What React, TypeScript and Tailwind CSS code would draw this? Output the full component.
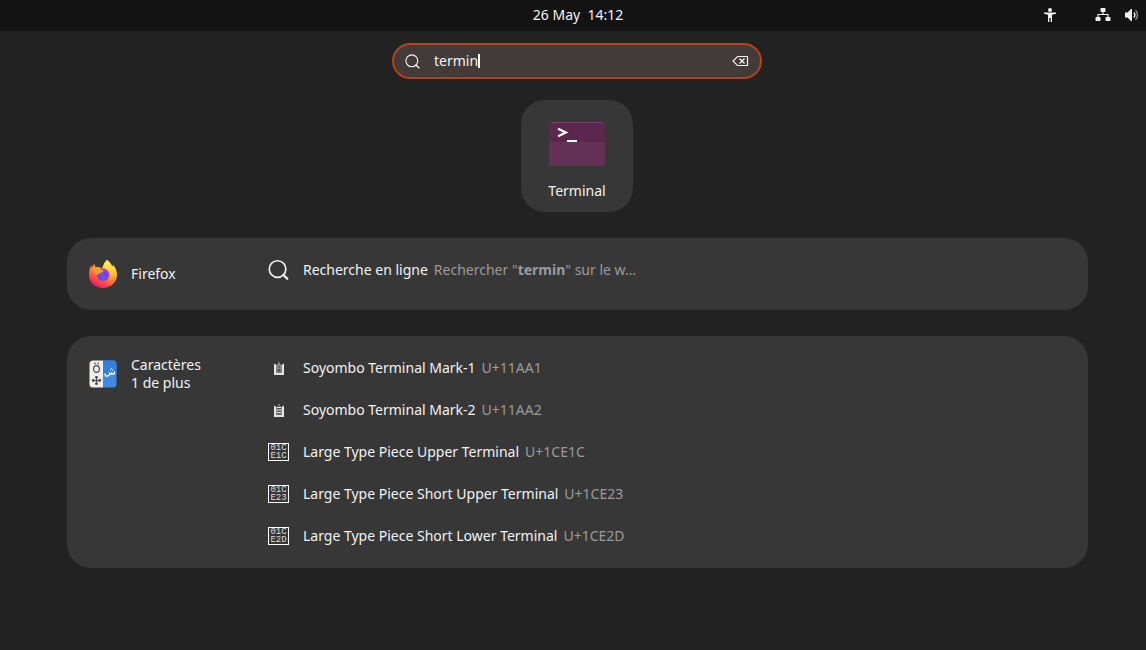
import type { ReactNode } from "react";

type Result = {
  icon: ReactNode;
  title: string;
  detail: ReactNode;
};

function AccessibilityIcon() {
  return (
    <svg className="h-4 w-4" viewBox="0 0 16 16" fill="currentColor" aria-hidden="true">
      <circle cx="8" cy="3" r="2" />
      <path d="M2 5.500h12v1.300l-4 1V15H8.700v-4H7.300v4H6V7.800l-4-1z" />
    </svg>
  );
}

function NetworkIcon() {
  return (
    <svg className="h-4 w-4" viewBox="0 0 16 16" fill="currentColor" aria-hidden="true">
      <rect x="5.500" y="1" width="5" height="4" rx="0.800" />
      <rect x="0.500" y="10" width="5" height="4" rx="0.800" />
      <rect x="10.500" y="10" width="5" height="4" rx="0.800" />
      <path d="M8 5v2.500M3 10.500v-3h10v3" fill="none" stroke="currentColor" strokeWidth="1.100" />
    </svg>
  );
}

function VolumeIcon() {
  return (
    <svg className="h-4 w-4" viewBox="0 0 16 16" fill="none" aria-hidden="true">
      <path d="M1 5.500h2.500L7 2h1v12H7l-3.500-3.500H1z" fill="currentColor" />
      <path d="M9.800 5.500a3.500 3.500 0 0 1 0 5" stroke="currentColor" strokeWidth="1.400" />
      <path d="M11.500 3.300a6.500 6.500 0 0 1 0 9.400" stroke="currentColor" strokeWidth="1.400" opacity="0.550" />
    </svg>
  );
}

function SearchIcon({ className }: { className: string }) {
  return (
    <svg className={className} viewBox="0 0 22 22" fill="none" stroke="currentColor" aria-hidden="true">
      <circle cx="10" cy="10" r="8.700" strokeWidth="1.700" />
      <path d="m16.200 16.200 4 4" strokeWidth="2.400" strokeLinecap="round" />
    </svg>
  );
}

function ClearIcon() {
  return (
    <svg className="h-4 w-[17px]" viewBox="0 0 17 16" fill="none" stroke="currentColor" aria-hidden="true">
      <path d="M5.500 3.500h10v9h-10L1 8z" strokeWidth="1.200" />
      <path d="m7.500 5.500 5 5m0-5-5 5" strokeWidth="1.300" />
    </svg>
  );
}

function TerminalIcon() {
  return (
    <svg className="h-11 w-14" viewBox="0 0 56 44" aria-hidden="true">
      <rect width="56" height="44" rx="4" fill="#643056" />
      <path d="M0 20V4a4 4 0 0 1 4-4h48a4 4 0 0 1 4 4v16z" fill="#5c274e" />
      <path d="M3 0.500h50" stroke="#74476a" />
      <path d="m9 6.800 7.800 3.700L9 14.200" fill="none" stroke="#fff" strokeWidth="2.200" />
      <path d="M18 19h10" stroke="#fff" strokeWidth="2" />
    </svg>
  );
}

function FirefoxIcon() {
  return (
    <svg className="h-7 w-7 shrink-0" viewBox="0 0 28 28" aria-hidden="true">
      <defs>
        <linearGradient id="fx-body" x1="0.850" y1="0.100" x2="0.350" y2="1">
          <stop offset="0" stopColor="#fff44f" />
          <stop offset="0.300" stopColor="#ffb52c" />
          <stop offset="0.600" stopColor="#ff7139" />
          <stop offset="0.850" stopColor="#ff3647" />
          <stop offset="1" stopColor="#e31587" />
        </linearGradient>
        <linearGradient id="fx-flame" x1="0.500" y1="0" x2="0.600" y2="1">
          <stop offset="0" stopColor="#fff44f" />
          <stop offset="0.500" stopColor="#ffd43c" />
          <stop offset="1" stopColor="#ff8a30" />
        </linearGradient>
        <radialGradient id="fx-globe" cx="0.450" cy="0.650" r="0.700">
          <stop offset="0" stopColor="#5a5ee6" />
          <stop offset="0.500" stopColor="#7543e5" />
          <stop offset="1" stopColor="#b833e1" />
        </radialGradient>
      </defs>
      <path
        d="M18 0c3 2.500 4.500 4.500 5.200 6.700.7-.8.7-1.500.6-2.200C26.500 7.500 28 11 28 14.500 28 22.500 21.700 28 14 28S0 22.500 0 14.500c0-4 .9-6.800 2.200-9.300l.5 2.700C3.400 6.200 4.400 5 5.700 4c0 1.500.3 2.500 1 3.300 2.100-.5 4 .1 5.800 1.100z"
        fill="url(#fx-body)"
      />
      <path
        d="M18 0c-2.700 2.100-4 4.800-3.800 8 4.200.2 7.100 3.100 7.100 7 0 2.400-.7 4.300-2.500 5.800 5.500-1.100 8.500-6.200 7.300-11.500-.8-2.200-1.700-1.900-2.900-2.600C22.500 4.400 20.500 2.100 18 0z"
        fill="url(#fx-flame)"
      />
      <circle cx="14" cy="14.800" r="6.200" fill="url(#fx-globe)" />
      <path
        d="M2.500 9.500c1.500-1.300 3-1.700 4.600-1.500 1.800-.2 3.200.5 4.200 1.600l3.200.8c-.2 1.500-2 2.300-3.700 2.700-.6.900-1.900 1.500-2.900 1.900-1.400-.6-3.200-2-5.400-5.500z"
        fill="#ff9a2c"
      />
    </svg>
  );
}

function CharactersIcon() {
  return (
    <svg className="h-7 w-7 shrink-0" viewBox="0 0 28 28" aria-hidden="true">
      <path d="M4 .5h10v27H4A3.500 3.500 0 0 1 .5 24V4A3.500 3.500 0 0 1 4 .5z" fill="#f0efed" />
      <path d="M14 .5h10A3.500 3.500 0 0 1 27.500 4v20a3.500 3.500 0 0 1-3.500 3.500H14z" fill="#3e8ae5" />
      <path d="M14 .5h10A3.500 3.500 0 0 1 27.500 4v10H14z" fill="#357fdd" />
      <g fill="none" stroke="#4a4a4a">
        <ellipse cx="7.500" cy="9" rx="2.900" ry="3.300" strokeWidth="1.200" />
        <path d="M5.300 3.500h1.500M8.300 3.500h1.500" strokeWidth="1.400" />
        <path d="M7.500 16.500v7.500M3.500 20.500h8" strokeWidth="1.200" />
      </g>
      <g fill="#4a4a4a">
        <circle cx="7.500" cy="17.300" r="1.400" />
        <circle cx="7.500" cy="23.700" r="1.400" />
        <circle cx="4.300" cy="20.500" r="1.400" />
        <circle cx="10.700" cy="20.500" r="1.400" />
      </g>
      <path
        d="M16.200 13.500c-1 3.500 4.300 3.700 4.300 0v-1.300 1c0 1.300 2.200 1.300 2.200 0v-1 1c0 1.300 2.800 1.300 2.800 0v-1.700"
        fill="none"
        stroke="#fff"
        strokeWidth="1.300"
      />
      <path d="M21 10h1M23 10h1M22 8.500h1" stroke="#fff" strokeWidth="1.100" />
    </svg>
  );
}

function SoyomboGlyph({ variant }: { variant: 1 | 2 }) {
  return (
    <svg className="h-[13px] w-2.5" viewBox="0 0 10 13" aria-hidden="true">
      <path d="M0 1.500 2.500 3v10H0zM10 1.500 7.500 3v10H10z" fill="#e6e6e6" />
      <path d="M2 11h6v2H2z" fill="#dedede" />
      {variant === 1 ? (
        <>
          <path d="M2.500 3 5 1l2.500 2v8h-5z" fill="#858585" />
          <path d="M5 0v2" stroke="#aaa" />
          <path d="M5 4v2M3.500 9 5 7l1.500 2z" fill="none" stroke="#4a4a4a" />
        </>
      ) : (
        <>
          <path d="M2.500 2.500h5V11h-5z" fill="#8a8a8a" />
          <path d="M5 0v2" stroke="#bbb" />
          <path d="M3 3.500h4M3 6h4M3 8.500h4" stroke="#ececec" />
          <path d="M3 4.700h4M3 7.200h4M3 9.700h4" stroke="#444" />
        </>
      )}
    </svg>
  );
}

function CodepointBox({ lines }: { lines: [string, string] }) {
  return (
    <span className="flex w-[21px] flex-col items-center border border-white font-['Liberation_Mono','DejaVu_Sans_Mono',monospace] text-[9px] leading-[8px] text-[#dcdcdc]">
      <span>{lines[0]}</span>
      <span>{lines[1]}</span>
    </span>
  );
}

const WEB_RESULTS: Result[] = [
  {
    icon: <SearchIcon className="h-[22px] w-[22px]" />,
    title: "Recherche en ligne",
    detail: (
      <>
        Rechercher "<b>termin</b>" sur le w…
      </>
    ),
  },
];

const CHARACTER_RESULTS: Result[] = [
  { icon: <SoyomboGlyph variant={1} />, title: "Soyombo Terminal Mark-1", detail: "U+11AA1" },
  { icon: <SoyomboGlyph variant={2} />, title: "Soyombo Terminal Mark-2", detail: "U+11AA2" },
  { icon: <CodepointBox lines={["01C", "E1C"]} />, title: "Large Type Piece Upper Terminal", detail: "U+1CE1C" },
  { icon: <CodepointBox lines={["01C", "E23"]} />, title: "Large Type Piece Short Upper Terminal", detail: "U+1CE23" },
  { icon: <CodepointBox lines={["01C", "E2D"]} />, title: "Large Type Piece Short Lower Terminal", detail: "U+1CE2D" },
];

type ProviderCardProps = {
  icon: ReactNode;
  name: string;
  more?: string;
  results: Result[];
};

function ProviderCard({ icon, name, more, results }: ProviderCardProps) {
  return (
    <section className="flex w-full items-start rounded-3xl bg-[#373737] py-[11px]">
      <button
        type="button"
        className="flex min-h-[50px] w-[190px] shrink-0 items-center gap-3.5 py-[9px] pl-[22px] text-left leading-[18px]"
      >
        {icon}
        <span>
          <span className="block">{name}</span>
          {more && <span className="block">{more}</span>}
        </span>
      </button>
      <ul className="min-w-0 flex-1">
        {results.map((result) => (
          <li key={result.title}>
            <button
              type="button"
              className="flex h-[42px] w-full items-center gap-3.5 pl-[11px] text-left whitespace-nowrap"
            >
              <span className="flex w-[21px] shrink-0 items-center justify-center">{result.icon}</span>
              <span className="flex gap-1.5">
                <span>{result.title}</span>
                <span className="text-[#9b9b9b]">{result.detail}</span>
              </span>
            </button>
          </li>
        ))}
      </ul>
    </section>
  );
}

export default function App() {
  return (
    <div className="min-h-screen bg-[#222222] font-['Noto_Sans','Open_Sans',sans-serif] text-sm text-[#f2f2f2]">
      <header className="grid h-[31px] grid-cols-[1fr_auto_1fr] items-center bg-[#131313] pr-1.5 pb-0.5 pl-4">
        <button type="button" className="col-start-2 whitespace-pre">26 May  14:12</button>
        <div className="flex items-center justify-end">
          <button type="button" aria-label="Accessibilité" className="mr-[37px]">
            <AccessibilityIcon />
          </button>
          <button type="button" aria-label="Menu système" className="flex gap-[13px]">
            <NetworkIcon />
            <VolumeIcon />
          </button>
        </div>
      </header>

      <main className="pt-3 pr-[58px] pb-10 pl-[67px]">
        <div className="flex flex-col items-center pr-px">
          <form
            role="search"
            className="flex h-9 w-[370px] max-w-full items-center rounded-full border-2 border-[#b3421c] bg-[#433b39] px-[11px]"
          >
            <SearchIcon className="h-[15px] w-[15px]" />
            <input
              type="text"
              aria-label="Rechercher"
              defaultValue="termin"
              className="ml-3.5 h-6 bg-transparent pb-0.5 outline-none [field-sizing:content]"
            />
            <span className="h-3.5 w-0.5 bg-white" />
            <button type="button" aria-label="Effacer" className="ml-auto">
              <ClearIcon />
            </button>
          </form>

          <button
            type="button"
            className="mt-[21px] flex h-28 w-28 flex-col items-center rounded-3xl bg-[#373737] pt-[22px]"
          >
            <TerminalIcon />
            <span className="mt-[15px]">Terminal</span>
          </button>
        </div>

        <div className="mt-[26px] flex flex-col gap-[26px]">
          <ProviderCard icon={<FirefoxIcon />} name="Firefox" results={WEB_RESULTS} />
          <ProviderCard icon={<CharactersIcon />} name="Caractères" more="1 de plus" results={CHARACTER_RESULTS} />
        </div>
      </main>
    </div>
  );
}
